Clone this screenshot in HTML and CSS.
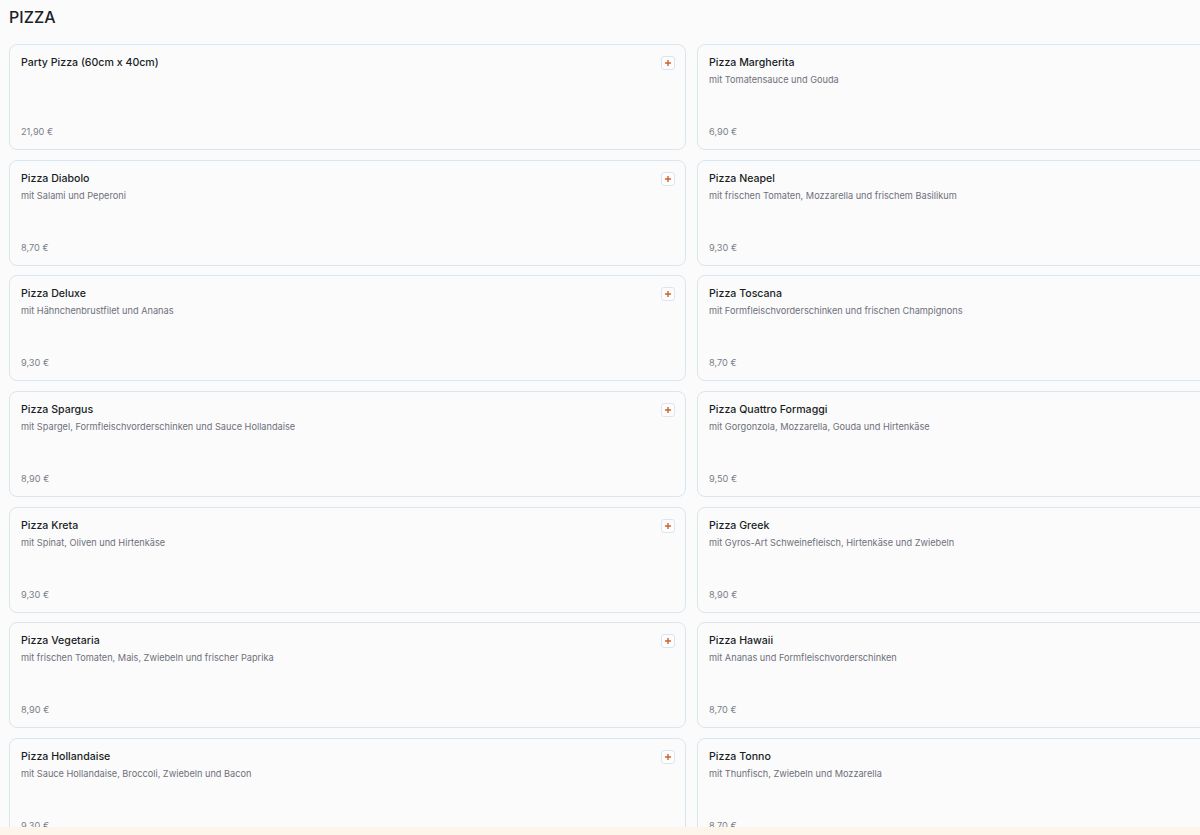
FILE: index.html
```html
<!DOCTYPE html>
<html lang="de">
  <head>
    <meta charset="UTF-8" />
    <meta name="viewport" content="width=device-width, initial-scale=1.0" />
    <title>Pizza</title>
    <link rel="stylesheet" href="styles.css">
  </head>
  <body>
    <section class="category">
      <h1>PIZZA</h1>
      <div class="menu-grid">
        <div class="item">
          <div class="item-head">
            <div class="item-text">
              <h3>Party Pizza (60cm x 40cm)</h3>
            </div>
            <button class="add" type="button"><svg viewBox="0 0 8 8"><path d="M4 1v6M1 4h6" /></svg></button>
          </div>
          <div class="price">21,90 €</div>
        </div>
        <div class="item">
          <div class="item-head">
            <div class="item-text">
              <h3>Pizza Margherita</h3>
              <p>mit Tomatensauce und Gouda</p>
            </div>
            <button class="add" type="button"><svg viewBox="0 0 8 8"><path d="M4 1v6M1 4h6" /></svg></button>
          </div>
          <div class="price">6,90 €</div>
        </div>

        <div class="item">
          <div class="item-head">
            <div class="item-text">
              <h3>Pizza Diabolo</h3>
              <p>mit Salami und Peperoni</p>
            </div>
            <button class="add" type="button"><svg viewBox="0 0 8 8"><path d="M4 1v6M1 4h6" /></svg></button>
          </div>
          <div class="price">8,70 €</div>
        </div>
        <div class="item">
          <div class="item-head">
            <div class="item-text">
              <h3>Pizza Neapel</h3>
              <p>mit frischen Tomaten, Mozzarella und frischem Basilikum</p>
            </div>
            <button class="add" type="button"><svg viewBox="0 0 8 8"><path d="M4 1v6M1 4h6" /></svg></button>
          </div>
          <div class="price">9,30 €</div>
        </div>

        <div class="item">
          <div class="item-head">
            <div class="item-text">
              <h3>Pizza Deluxe</h3>
              <p>mit Hähnchenbrustfilet und Ananas</p>
            </div>
            <button class="add" type="button"><svg viewBox="0 0 8 8"><path d="M4 1v6M1 4h6" /></svg></button>
          </div>
          <div class="price">9,30 €</div>
        </div>
        <div class="item">
          <div class="item-head">
            <div class="item-text">
              <h3>Pizza Toscana</h3>
              <p>mit Formfleischvorderschinken und frischen Champignons</p>
            </div>
            <button class="add" type="button"><svg viewBox="0 0 8 8"><path d="M4 1v6M1 4h6" /></svg></button>
          </div>
          <div class="price">8,70 €</div>
        </div>

        <div class="item">
          <div class="item-head">
            <div class="item-text">
              <h3>Pizza Spargus</h3>
              <p>mit Spargel, Formfleischvorderschinken und Sauce Hollandaise</p>
            </div>
            <button class="add" type="button"><svg viewBox="0 0 8 8"><path d="M4 1v6M1 4h6" /></svg></button>
          </div>
          <div class="price">8,90 €</div>
        </div>
        <div class="item">
          <div class="item-head">
            <div class="item-text">
              <h3>Pizza Quattro Formaggi</h3>
              <p>mit Gorgonzola, Mozzarella, Gouda und Hirtenkäse</p>
            </div>
            <button class="add" type="button"><svg viewBox="0 0 8 8"><path d="M4 1v6M1 4h6" /></svg></button>
          </div>
          <div class="price">9,50 €</div>
        </div>

        <div class="item">
          <div class="item-head">
            <div class="item-text">
              <h3>Pizza Kreta</h3>
              <p>mit Spinat, Oliven und Hirtenkäse</p>
            </div>
            <button class="add" type="button"><svg viewBox="0 0 8 8"><path d="M4 1v6M1 4h6" /></svg></button>
          </div>
          <div class="price">9,30 €</div>
        </div>
        <div class="item">
          <div class="item-head">
            <div class="item-text">
              <h3>Pizza Greek</h3>
              <p>mit Gyros-Art Schweinefleisch, Hirtenkäse und Zwiebeln</p>
            </div>
            <button class="add" type="button"><svg viewBox="0 0 8 8"><path d="M4 1v6M1 4h6" /></svg></button>
          </div>
          <div class="price">8,90 €</div>
        </div>

        <div class="item">
          <div class="item-head">
            <div class="item-text">
              <h3>Pizza Vegetaria</h3>
              <p>mit frischen Tomaten, Mais, Zwiebeln und frischer Paprika</p>
            </div>
            <button class="add" type="button"><svg viewBox="0 0 8 8"><path d="M4 1v6M1 4h6" /></svg></button>
          </div>
          <div class="price">8,90 €</div>
        </div>
        <div class="item">
          <div class="item-head">
            <div class="item-text">
              <h3>Pizza Hawaii</h3>
              <p>mit Ananas und Formfleischvorderschinken</p>
            </div>
            <button class="add" type="button"><svg viewBox="0 0 8 8"><path d="M4 1v6M1 4h6" /></svg></button>
          </div>
          <div class="price">8,70 €</div>
        </div>

        <div class="item">
          <div class="item-head">
            <div class="item-text">
              <h3>Pizza Hollandaise</h3>
              <p>mit Sauce Hollandaise, Broccoli, Zwiebeln und Bacon</p>
            </div>
            <button class="add" type="button"><svg viewBox="0 0 8 8"><path d="M4 1v6M1 4h6" /></svg></button>
          </div>
          <div class="price">9,30 €</div>
        </div>
        <div class="item">
          <div class="item-head">
            <div class="item-text">
              <h3>Pizza Tonno</h3>
              <p>mit Thunfisch, Zwiebeln und Mozzarella</p>
            </div>
            <button class="add" type="button"><svg viewBox="0 0 8 8"><path d="M4 1v6M1 4h6" /></svg></button>
          </div>
          <div class="price">8,70 €</div>
        </div>
      </div>
    </section>

    <div class="cart-bar"></div>
  </body>
</html>
```

FILE: styles.css
```css
html {
  overflow: hidden;
}
body {
  margin: 0;
  padding: 7px 9px 0;
  background-color: #fbfbfc;
  color: #1d2127;
  font-family: Inter, "Noto Sans", Arial, sans-serif;
}
.category h1 {
  margin: 0 0 17px;
  font-size: 16px;
  line-height: 20px;
  font-weight: 500;
}
.menu-grid {
  display: grid;
  grid-template-columns: 677px 677px;
  column-gap: 11px;
  row-gap: 9.67px;
}
.item {
  box-sizing: border-box;
  height: 106px;
  display: flex;
  flex-direction: column;
  padding: 11px 10px 12px 11px;
  border: 1px solid #d9e6f0;
  border-radius: 8px;
  background-color: #fbfbfc;
}
.item-head {
  display: flex;
  justify-content: space-between;
  align-items: flex-start;
}
.item h3 {
  margin: 0;
  font-size: 10.6px;
  line-height: 14px;
  font-weight: 500;
  color: #1a1e24;
}
.item p {
  margin: 4px 0 0;
  font-size: 9.2px;
  line-height: 11px;
  color: #6e7079;
}
/* small square "+" that adds the dish */
.add {
  display: flex;
  align-items: center;
  justify-content: center;
  width: 14px;
  height: 14px;
  padding: 0;
  border: 1px solid #d9e6f0;
  border-radius: 3px;
  background-color: #fdfdfe;
  cursor: pointer;
}
.add svg {
  width: 8px;
  height: 8px;
  fill: none;
  stroke: #d2602d;
  stroke-width: 1.4;
}
.price {
  margin-top: auto;
  font-size: 9.2px;
  line-height: 11px;
  color: #7a7f87;
}
.cart-bar {
  position: fixed;
  left: 0;
  right: 0;
  bottom: 0;
  height: 8px;
  background-color: #fdf4ea;
}
```
